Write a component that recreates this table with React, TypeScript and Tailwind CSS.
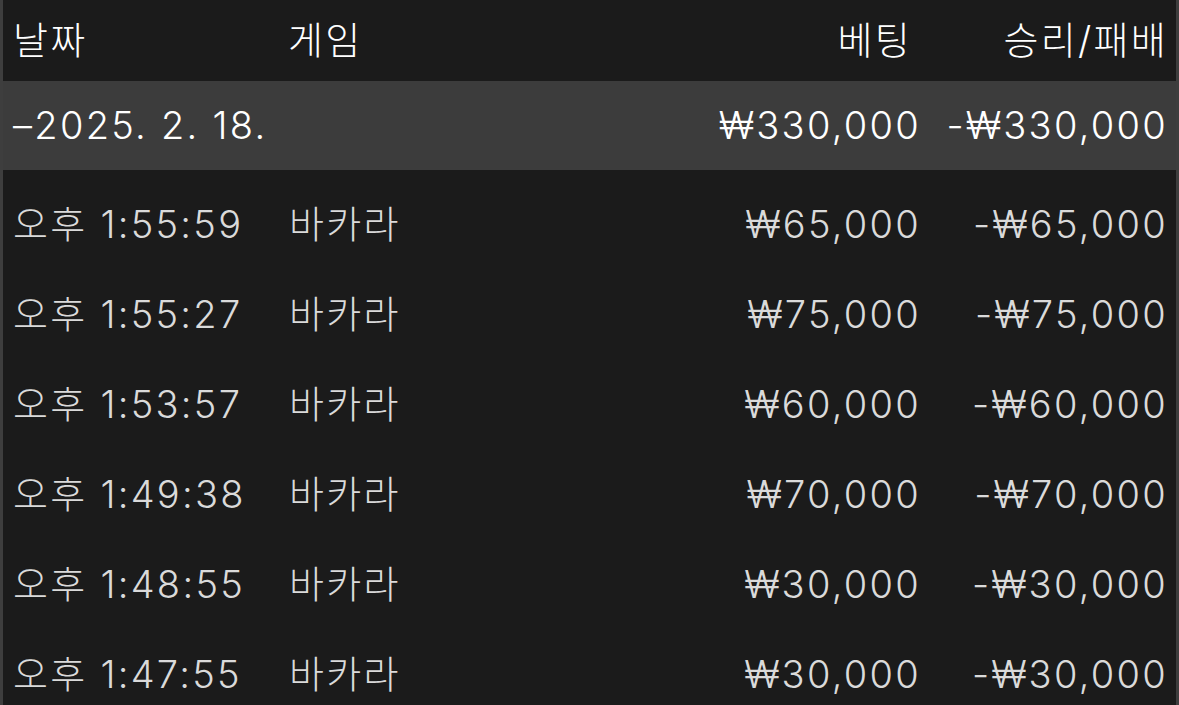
const rows = [
  { time: "오후 1:55:59", game: "바카라", bet: "₩65,000", result: "-₩65,000" },
  { time: "오후 1:55:27", game: "바카라", bet: "₩75,000", result: "-₩75,000" },
  { time: "오후 1:53:57", game: "바카라", bet: "₩60,000", result: "-₩60,000" },
  { time: "오후 1:49:38", game: "바카라", bet: "₩70,000", result: "-₩70,000" },
  { time: "오후 1:48:55", game: "바카라", bet: "₩30,000", result: "-₩30,000" },
  { time: "오후 1:47:55", game: "바카라", bet: "₩30,000", result: "-₩30,000" },
];

const font = { fontFamily: 'Inter, "Noto Sans CJK KR", sans-serif' };

export default function App() {
  return (
    <div
      className="h-[705px] w-[1179px] overflow-hidden bg-[#1b1b1b] border-x-[3px] border-[#3e3e3e] text-[38px] font-light tracking-[0.06em]"
      style={font}
    >
      {/* header */}
      <div className="flex h-[81px] items-center pl-[10px] pr-[8px] text-white">
        <div className="w-[275px]">날짜</div>
        <div className="flex-1">게임</div>
        <div className="w-[220px] pr-[9px] text-right">베팅</div>
        <div className="w-[247px] text-right">승리/패배</div>
      </div>

      {/* day summary */}
      <div className="flex h-[89px] items-center bg-[#3c3c3c] pl-[10px] pr-[8px] text-white">
        <div className="flex-1">–2025. 2. 18.</div>
        <div className="w-[220px] text-right">₩330,000</div>
        <div className="w-[247px] text-right">-₩330,000</div>
      </div>

      <div className="pt-[9px] text-[#dadada]">
        {rows.map((r, i) => (
          <div key={i} className="flex h-[90px] items-center pl-[10px] pr-[8px]">
            <div className="w-[276px]">{r.time}</div>
            <div className="flex-1">{r.game}</div>
            <div className="w-[220px] text-right">{r.bet}</div>
            <div className="w-[247px] text-right">{r.result}</div>
          </div>
        ))}
      </div>
    </div>
  );
}
